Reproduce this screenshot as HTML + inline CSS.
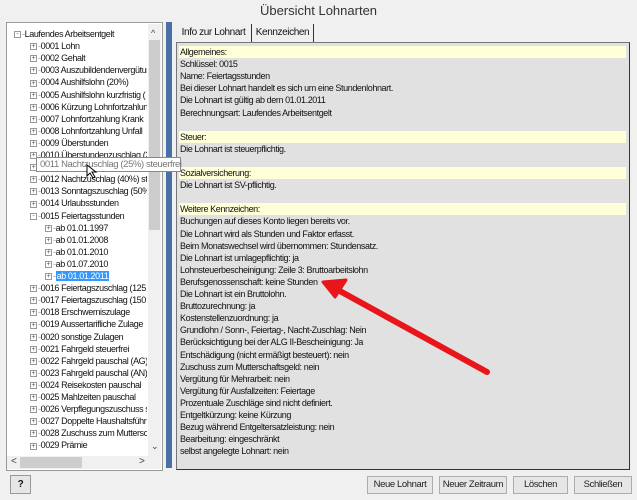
<!DOCTYPE html>
<html><head><meta charset="utf-8"><style>
*{margin:0;padding:0;box-sizing:border-box}
body{width:637px;height:500px;background:#f0f0f0;font-family:"Liberation Sans",Tahoma,sans-serif;font-size:9px;letter-spacing:-0.4px;color:#111;position:relative;overflow:hidden}
.abs{position:absolute}
.title{left:0;top:3px;width:637px;text-align:center;font-size:13px;color:#333;letter-spacing:0}
.tree{left:6px;top:22px;width:157px;height:449px;border:1px solid #9a9a9a;background:#fff}
.ti{position:absolute;height:12px;line-height:12px;white-space:nowrap}
.ex{display:inline-block;width:7px;height:7px;border:1px solid #999;font-size:7px;line-height:5px;text-align:center;color:#555;vertical-align:middle;margin-right:1px;letter-spacing:0}
.split{left:166px;top:22px;width:6px;height:446px;background:#4a6fa5}
.tab{position:absolute;top:24px;height:18px;line-height:17px;font-size:10px;white-space:nowrap;text-align:center}
.box{left:176px;top:42px;width:454px;height:428px;border:1px solid #333;border-top-color:#777;border-left-color:#777;background:#e1e1e1}
.ln{position:absolute;left:2px;right:3px;height:12px;line-height:12px;white-space:nowrap;padding-left:1px}
.y{background:#ffffd8}
.btn{position:absolute;top:476px;height:18px;border:1px solid #adadad;background:#e6e6e6;text-align:center;line-height:16px;font-size:9.5px;color:#222;white-space:nowrap}
</style></head><body>
<div class="abs title">Übersicht Lohnarten</div>
<div class="abs tree"></div>
<div id="tr"></div>
<div class="abs" style="left:148px;top:24px;width:13px;height:432px;background:#f0f0f0"></div>
<div class="abs" style="left:149px;top:40px;width:11px;height:190px;background:#cdcdcd"></div>
<div class="abs" style="left:151px;top:28px;font-size:9px;color:#444">^</div>
<div class="abs" style="left:151px;top:441px;font-size:9px;color:#444">⌄</div>
<div class="abs" style="left:7px;top:456px;width:154px;height:13px;background:#f0f0f0"></div>
<div class="abs" style="left:20px;top:457px;width:62px;height:11px;background:#cdcdcd"></div>
<div class="abs" style="left:11px;top:456px;font-size:10px;color:#444">&lt;</div>
<div class="abs" style="left:139px;top:456px;font-size:10px;color:#444">&gt;</div>
<div class="abs split"></div>
<div class="tab" style="left:176px;width:76px;border-right:1px solid #333;">Info zur Lohnart</div>
<div class="tab" style="left:252px;width:62px;border-right:1px solid #333;">Kennzeichen</div>
<div class="abs box" id="bx"></div>
<div class="abs" style="left:36px;top:157px;width:145px;height:15px;border:1px solid #888;background:#fff;color:#777;line-height:13px;padding-left:3px;font-size:9.5px;white-space:nowrap">0011 Nachtzuschlag (25%) steuerfrei</div>
<svg class="abs" style="left:86px;top:164px" width="12" height="16"><path d="M1 1 L1 12 L4 9 L7 14 L9 13 L6 8 L10 8 Z" fill="#fff" stroke="#000" stroke-width="1"/></svg>
<svg class="abs" style="left:0;top:0" width="637" height="500"><path d="M487 372 L338 290" stroke="#e8161a" stroke-width="6" stroke-linecap="round"/><path d="M323 282 L346 280 L335 297 Z" fill="#e8161a" stroke="#e8161a" stroke-width="3" stroke-linejoin="round"/></svg>
<div class="abs" style="left:10px;top:475px;width:21px;height:19px;border:1px solid #999;background:#e6e6e6;text-align:center;font-size:10px;line-height:17px;font-weight:bold">?</div>
<div class="btn" style="left:367px;width:66px">Neue Lohnart</div>
<div class="btn" style="left:439px;width:68px">Neuer Zeitraum</div>
<div class="btn" style="left:513px;width:55px">Löschen</div>
<div class="btn" style="left:574px;width:58px">Schließen</div>
<script>
var t=[[0,"Laufendes Arbeitsentgelt","-"],[1,"0001 Lohn"],[1,"0002 Gehalt"],[1,"0003 Auszubildendenvergütur"],[1,"0004 Aushilfslohn (20%)"],[1,"0005 Aushilfslohn kurzfristig ("],[1,"0006 Kürzung Lohnfortzahlun"],[1,"0007 Lohnfortzahlung Krank"],[1,"0008 Lohnfortzahlung Unfall"],[1,"0009 Überstunden"],[1,"0010 Überstundenzuschlag (2"],[1,"0011 Nachtzuschlag"],[1,"0012 Nachtzuschlag (40%) st"],[1,"0013 Sonntagszuschlag (50%"],[1,"0014 Urlaubsstunden"],[1,"0015 Feiertagsstunden","-"],[2,"ab 01.01.1997"],[2,"ab 01.01.2008"],[2,"ab 01.01.2010"],[2,"ab 01.07.2010"],[2,"ab 01.01.2011","+",1],[1,"0016 Feiertagszuschlag (125"],[1,"0017 Feiertagszuschlag (150"],[1,"0018 Erschwerniszulage"],[1,"0019 Aussertarifliche Zulage"],[1,"0020 sonstige Zulagen"],[1,"0021 Fahrgeld steuerfrei"],[1,"0022 Fahrgeld pauschal (AG)"],[1,"0023 Fahrgeld pauschal (AN)"],[1,"0024 Reisekosten pauschal"],[1,"0025 Mahlzeiten pauschal"],[1,"0026 Verpflegungszuschuss s"],[1,"0027 Doppelte Haushaltsführu"],[1,"0028 Zuschuss zum Muttersch"],[1,"0029 Prämie"]];
var h="";t.forEach(function(r,i){var x=[14,30,45][r[0]];var top=28+i*12.1;var txt=r[3]?'<span style="background:#3399ff;color:#fff;padding:0 1px">'+r[1]+'</span>':r[1];
h+='<div class="ti" style="left:'+x+'px;top:'+top+'px;width:'+(147-x)+'px;overflow:hidden"><span class="ex">'+(r[2]||"+")+'</span><span style="color:#999">-</span>'+txt+'</div>';});
document.getElementById("tr").innerHTML=h;
var L=[["Allgemeines:",1],["Schlüssel: 0015"],["Name: Feiertagsstunden"],["Bei dieser Lohnart handelt es sich um eine Stundenlohnart."],["Die Lohnart ist gültig ab dem 01.01.2011"],["Berechnungsart: Laufendes Arbeitsentgelt"],[""],["Steuer:",1],["Die Lohnart ist steuerpflichtig."],[""],["Sozialversicherung:",1],["Die Lohnart ist SV-pflichtig."],[""],["Weitere Kennzeichen:",1],["Buchungen auf dieses Konto liegen bereits vor."],["Die Lohnart wird als Stunden und Faktor erfasst."],["Beim Monatswechsel wird übernommen: Stundensatz."],["Die Lohnart ist umlagepflichtig: ja"],["Lohnsteuerbescheinigung: Zeile 3: Bruttoarbeitslohn"],["Berufsgenossenschaft: keine Stunden"],["Die Lohnart ist ein Bruttolohn."],["Bruttozurechnung: ja"],["Kostenstellenzuordnung: ja"],["Grundlohn / Sonn-, Feiertag-, Nacht-Zuschlag: Nein"],["Berücksichtigung bei der ALG II-Bescheinigung: Ja"],["Entschädigung (nicht ermäßigt besteuert): nein"],["Zuschuss zum Mutterschaftsgeld: nein"],["Vergütung für Mehrarbeit: nein"],["Vergütung für Ausfallzeiten: Feiertage"],["Prozentuale Zuschläge sind nicht definiert."],["Entgeltkürzung: keine Kürzung"],["Bezug während Entgeltersatzleistung: nein"],["Bearbeitung: eingeschränkt"],["selbst angelegte Lohnart: nein"]];
h="";L.forEach(function(r,i){h+='<div class="ln'+(r[1]?' y':'')+'" style="top:'+(3+i*12.1)+'px">'+r[0]+'</div>';});
document.getElementById("bx").innerHTML=h;
</script>
</body></html>
